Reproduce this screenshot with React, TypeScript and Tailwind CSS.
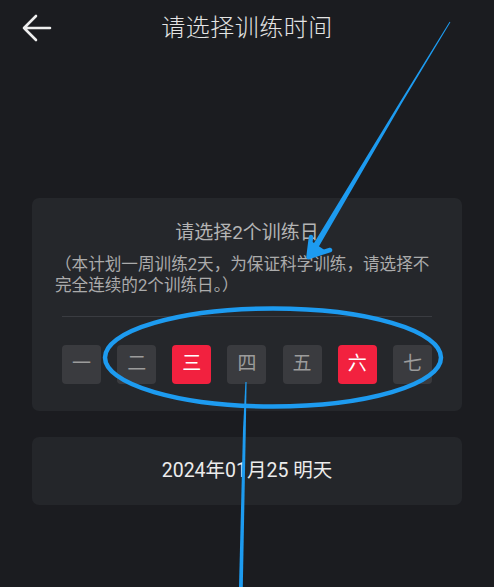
import React from "react";

const days = [
  { label: "一", on: false },
  { label: "二", on: false },
  { label: "三", on: true },
  { label: "四", on: false },
  { label: "五", on: false },
  { label: "六", on: true },
  { label: "七", on: false },
];

export default function App() {
  return (
    <div
      className="relative w-[494px] h-[587px] overflow-hidden bg-[#1b1c20]"
      style={{ fontFamily: 'Roboto, "Noto Sans CJK SC", "Noto Sans", sans-serif' }}
    >
      {/* Header */}
      <div className="relative h-[56px] flex items-center justify-center">
        <button className="absolute left-[18px] top-[12px] w-[36px] h-[32px] flex items-center justify-center">
          <svg width="32" height="28" viewBox="0 0 32 28" fill="none">
            <path
              d="M16 2 L4 14 L16 26 M4 14 H30"
              stroke="#eeeeee"
              strokeWidth="2.6"
              strokeLinecap="round"
              strokeLinejoin="round"
            />
          </svg>
        </button>
        <div className="text-[24px] leading-none font-light text-[#e4e4e4] tracking-[0.5px]">请选择训练时间</div>
      </div>

      {/* Card 1 */}
      <div className="mx-[32px] mt-[142px] rounded-[7px] bg-[#25272b] px-[30px] pt-[22px] pb-[27px]">
        <div className="text-center text-[19px] leading-[26px] text-[#b4b4b4]">请选择2个训练日</div>
        <div className="-mx-[7px] mt-[8px] text-[16.6px] leading-[21px] text-[#ababab]">
          （本计划一周训练2天，为保证科学训练，请选择不
          <br />
          完全连续的2个训练日。）
        </div>
        <div className="mt-[20px] h-px bg-[#3a3c41]" />
        <div className="mt-[28px] flex justify-between">
          {days.map((d) => (
            <div
              key={d.label}
              className={
                d.on
                  ? "w-[39px] h-[39px] rounded-[4px] bg-[#f2213f] flex items-center justify-center text-[19px] text-white"
                  : "w-[39px] h-[39px] rounded-[4px] bg-[#3a3b3f] flex items-center justify-center text-[19px] text-[#9c9c9c]"
              }
            >
              {d.label}
            </div>
          ))}
        </div>
      </div>

      {/* Card 2 */}
      <div className="mx-[32px] mt-[26px] h-[68px] rounded-[7px] bg-[#24262a] flex items-center justify-center">
        <span className="text-[19.5px] text-[#ececec]">2024年01月25 明天</span>
      </div>

      {/* Annotation overlay */}
      <svg
        className="absolute inset-0 pointer-events-none"
        width="494"
        height="587"
        viewBox="0 0 494 587"
      >
        <polygon
          points="450.4,22.3 449.6,21.7 400,102 309.9,249.8 315.1,253 401.8,103.2"
          fill="#1d9bf0"
        />
        <polyline
          points="311,237 308.5,257 330,250"
          fill="none"
          stroke="#1d9bf0"
          strokeWidth="4.5"
          strokeLinecap="round"
          strokeLinejoin="round"
        />
        <polygon points="311,241 308.5,257 326,251" fill="#1d9bf0" />
        <ellipse cx="273" cy="357.5" rx="168" ry="49" fill="none" stroke="#1d9bf0" strokeWidth="4.5" />
        <polygon points="246.6,382 245.4,382 243,430 239,587 242.8,587 245.8,430" fill="#1d9bf0" />
      </svg>
    </div>
  );
}
